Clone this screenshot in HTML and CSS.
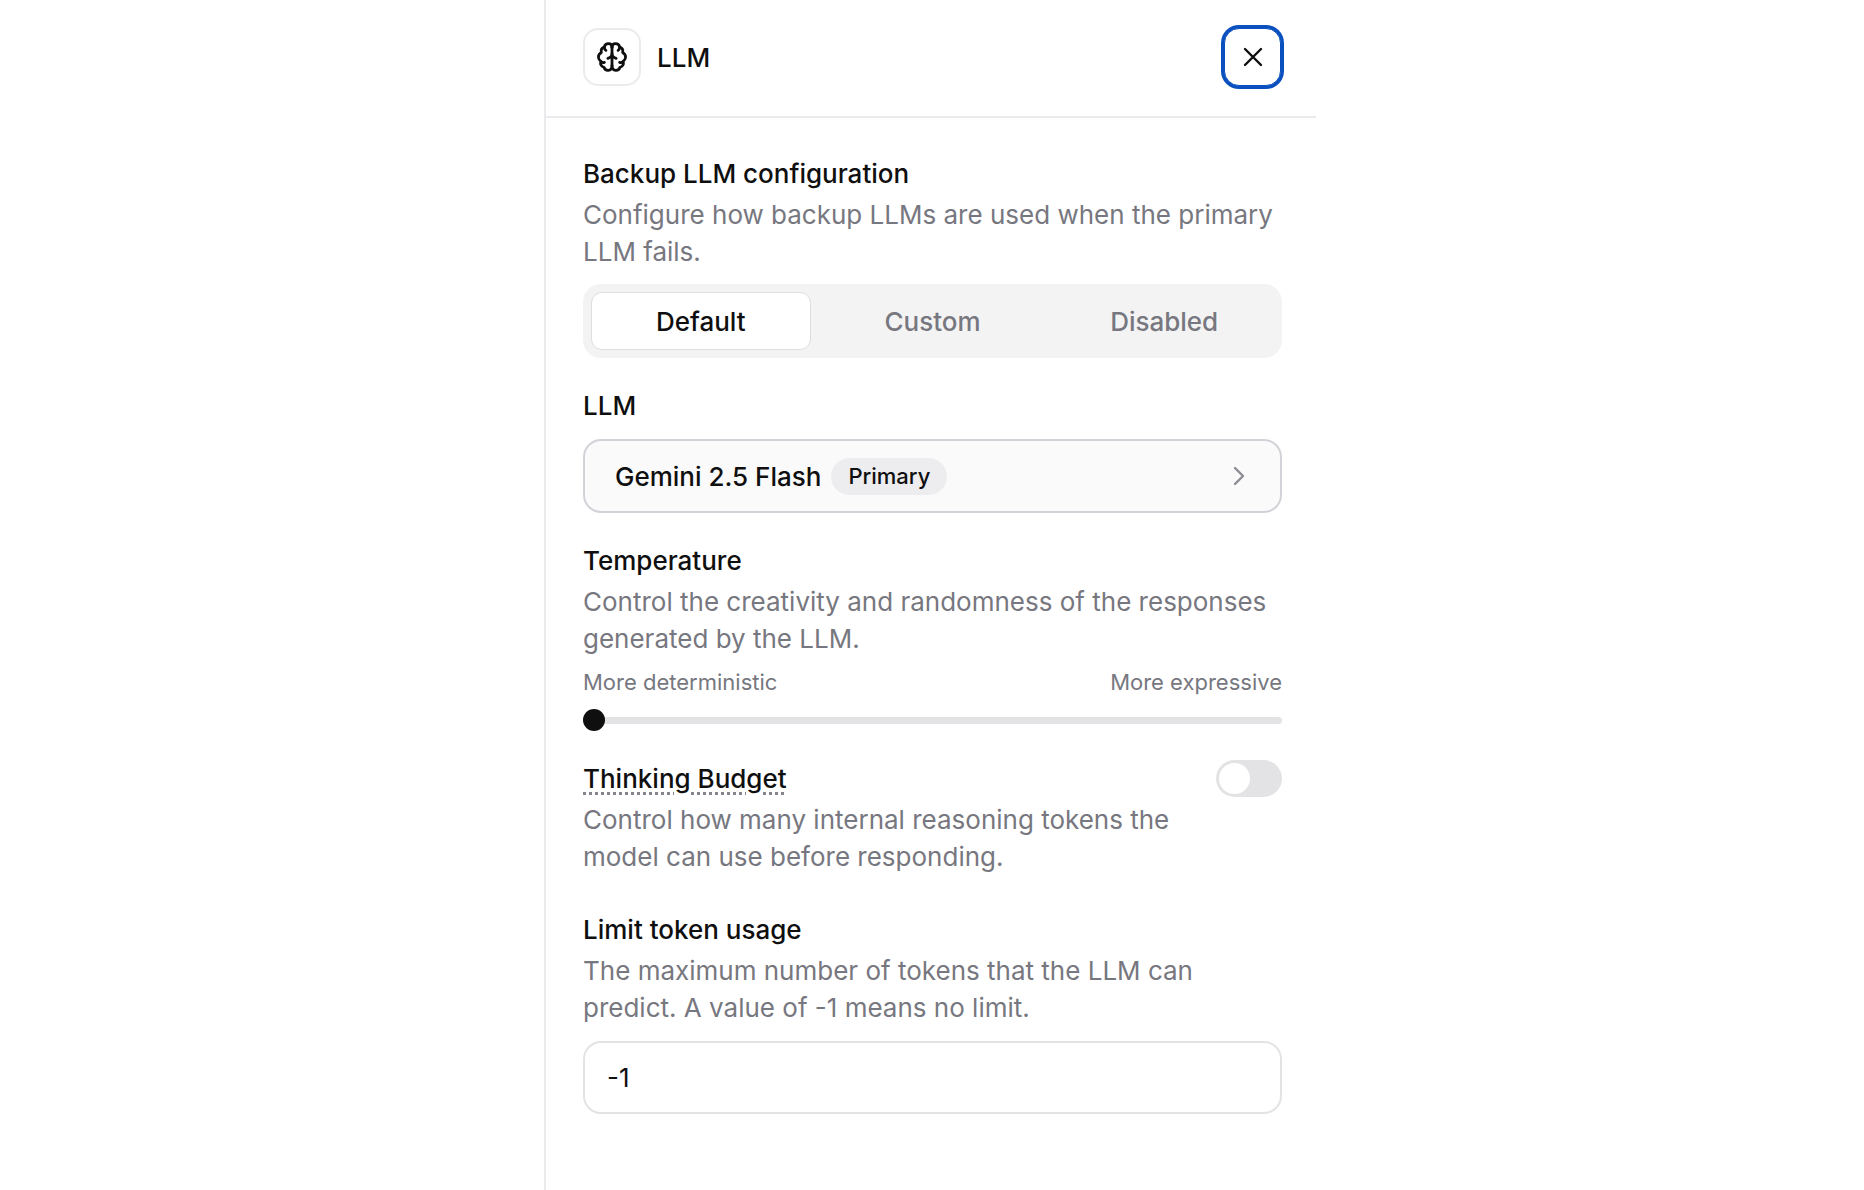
FILE: index.html
```html
<!DOCTYPE html>
<html lang="en">
<head>
<meta charset="utf-8">
<meta name="viewport" content="width=device-width, initial-scale=1">
<title>LLM settings</title>
<link rel="stylesheet" href="styles.css">
</head>
<body>
<main class="panel">
  <header class="panel-header">
    <span class="panel-icon">
      <svg class="icon-brain" viewBox="-1 -1 26 26" aria-hidden="true">
        <path d="M12 5v13"/>
        <path d="M12 5C12 3.300 10.900 2.400 9.500 2.400C8 2.400 6.700 3.400 6.500 4.900C4.700 5.400 3.900 6.900 4.300 8.700C2.900 9.500 2.100 10.700 2.200 12.200C2.300 13.600 3 14.600 4 15.200C3.300 17.200 4.300 19 6.200 19.400C6.700 21 8 21.700 9.300 21.600C11 21.500 12 20.200 12 18.500"/>
        <path d="M12 5C12 3.300 13.100 2.400 14.500 2.400C16 2.400 17.300 3.400 17.500 4.900C19.300 5.400 20.100 6.900 19.700 8.700C21.100 9.500 21.900 10.700 21.800 12.200C21.700 13.600 21 14.600 20 15.200C20.700 17.200 19.700 19 17.800 19.400C17.300 21 16 21.700 14.700 21.600C13 21.500 12 20.200 12 18.500"/>
        <path d="M9 13C10.700 12.500 12 11.300 12 9.600C12 11.300 13.300 12.500 15 13"/>
        <path d="M6.500 4.900C6.500 6 6.900 6.700 7.600 7.200M17.500 4.900C17.500 6 17.100 6.700 16.400 7.200M4 15.200C4.700 15.900 5.600 16.200 6.500 15.900M20 15.200C19.300 15.900 18.400 16.200 17.500 15.900"/>
      </svg>
    </span>
    <h1 class="title">LLM</h1>
    <button class="close" type="button" aria-label="Close">
      <svg class="icon-close" viewBox="0 0 20 20" aria-hidden="true"><path d="M2 2l16 16M18 2L2 18"/></svg>
    </button>
  </header>

  <form class="settings">
    <section class="section">
      <h2 class="label">Backup LLM configuration</h2>
      <p class="hint">Configure how backup LLMs are used when the primary LLM fails.</p>
      <div class="segments" role="group" aria-label="Backup LLM configuration">
        <button class="segment segment-active" type="button" aria-pressed="true">Default</button>
        <button class="segment" type="button" aria-pressed="false">Custom</button>
        <button class="segment" type="button" aria-pressed="false">Disabled</button>
      </div>
    </section>

    <section class="section">
      <h2 class="label" id="llm-label">LLM</h2>
      <button class="picker" type="button" aria-describedby="llm-label">
        <span>Gemini 2.5 Flash</span>
        <span class="badge">Primary</span>
        <svg class="icon-chevron" viewBox="0 0 12 20" aria-hidden="true"><path d="M2 2l8 8-8 8"/></svg>
      </button>
    </section>

    <section class="section">
      <label class="label" for="temperature">Temperature</label>
      <p class="hint">Control the creativity and randomness of the responses generated by the LLM.</p>
      <div class="scale"><span>More deterministic</span><span>More expressive</span></div>
      <input class="slider" id="temperature" type="range" min="0" max="1" step="0.01" value="0">
    </section>

    <section class="section section-split">
      <div class="section-text">
        <label class="label" for="thinking"><span class="term">Thinking Budget</span></label>
        <p class="hint">Control how many internal reasoning tokens the model can use before responding.</p>
      </div>
      <input class="switch" id="thinking" type="checkbox" role="switch">
    </section>

    <section class="section section-last">
      <label class="label" for="limit">Limit token usage</label>
      <p class="hint">The maximum number of tokens that the LLM can predict. A value of -1 means no limit.</p>
      <input class="field" id="limit" type="text" inputmode="numeric" value="-1">
    </section>
  </form>
</main>
</body>
</html>
```

FILE: styles.css
```css
* {
  box-sizing: border-box;
}

body {
  margin: 0;
  padding-right: 4px;
  background: #fff;
  color: #0f0f10;
  font: 400 26px/37px Inter, "Liberation Sans", sans-serif;
}

button,
input {
  margin: 0;
  color: inherit;
  font: inherit;
}

svg {
  fill: none;
  stroke: currentColor;
  stroke-linecap: round;
  stroke-linejoin: round;
}

.panel {
  width: 100%;
  max-width: 772px;
  min-height: 100vh;
  margin: 0 auto;
  border-left: 2px solid #ebebed;
}

.panel-header {
  display: flex;
  align-items: center;
  gap: 16px;
  padding: 28px 35px 30px 37px;
  border-bottom: 2px solid #ebebed;
}

.panel-icon {
  display: grid;
  place-items: center;
  width: 58px;
  height: 58px;
  border: 2px solid #ebebed;
  border-radius: 15px;
}

.icon-brain {
  width: 36px;
  height: 36px;
  stroke-width: 2;
}

.title {
  flex: 1;
  margin: 0;
  font-size: 26px;
  font-weight: 500;
}

.close {
  display: grid;
  place-items: center;
  width: 57px;
  height: 58px;
  padding: 0;
  border: 1px solid #0b50bf;
  border-radius: 15px;
  background: #fff;
  box-shadow: 0 0 0 3px #0b50bf;
}

.icon-close {
  width: 20px;
  height: 20px;
  stroke-width: 2.4;
}

.settings {
  display: flex;
  flex-direction: column;
  gap: 29px;
  padding: 37px 34px 37px 37px;
}

.section {
  display: flex;
  flex-direction: column;
}

.section-split {
  flex-direction: row;
  align-items: flex-start;
  gap: 37px;
}

.section-text {
  flex: 1;
}

.section-last {
  padding-top: 7px;
}

.label {
  display: block;
  margin: 0;
  font-size: 26px;
  font-weight: 500;
}

.hint {
  margin: 4px 0 0;
  color: #777780;
}

.term {
  text-decoration: underline dotted #85858d 3px;
  text-underline-offset: 4px;
}

.segments {
  display: grid;
  grid-template-columns: repeat(3, 1fr);
  gap: 12px;
  margin-top: 14px;
  padding: 8px;
  border-radius: 18px;
  background: #f3f3f4;
}

.segment {
  height: 58px;
  padding: 0;
  border: 1px solid transparent;
  border-radius: 11px;
  background: transparent;
  color: #777780;
  font-weight: 500;
}

.segment-active {
  border-color: #dedee3;
  background: #fff;
  color: #0f0f10;
}

.picker {
  display: flex;
  align-items: center;
  gap: 10px;
  height: 74px;
  margin-top: 15px;
  padding: 0 35px 0 30px;
  border: 2px solid #d2d2d8;
  border-radius: 18px;
  background: #fafafa;
  font-weight: 500;
}

.badge {
  padding: 0 17px;
  border-radius: 19px;
  background: #ededef;
  font-size: 22px;
}

.icon-chevron {
  width: 12px;
  height: 20px;
  margin-left: auto;
  color: #8b8b93;
  stroke-width: 2.4;
}

.scale {
  display: flex;
  justify-content: space-between;
  margin-top: 10px;
  color: #777780;
  font-size: 22px;
  line-height: 30px;
}

.slider {
  width: 100%;
  height: 22px;
  margin-top: 12px;
  appearance: none;
  background: transparent;
}

.slider::-webkit-slider-runnable-track {
  height: 7px;
  border-radius: 4px;
  background: #e3e3e5;
}

.slider::-webkit-slider-thumb {
  width: 22px;
  height: 22px;
  margin-top: -8px;
  appearance: none;
  border-radius: 50%;
  background: #0f0f10;
}

.switch {
  display: flex;
  width: 66px;
  height: 37px;
  padding: 3px;
  appearance: none;
  border-radius: 19px;
  background: #e3e3e5;
}

.switch::before {
  content: "";
  width: 31px;
  height: 31px;
  border-radius: 50%;
  background: #fff;
}

.switch:checked {
  justify-content: flex-end;
  background: #0f0f10;
}

.field {
  width: 100%;
  height: 73px;
  margin-top: 15px;
  padding: 0 22px;
  border: 2px solid #e3e3e5;
  border-radius: 18px;
  background: #fff;
}
```
